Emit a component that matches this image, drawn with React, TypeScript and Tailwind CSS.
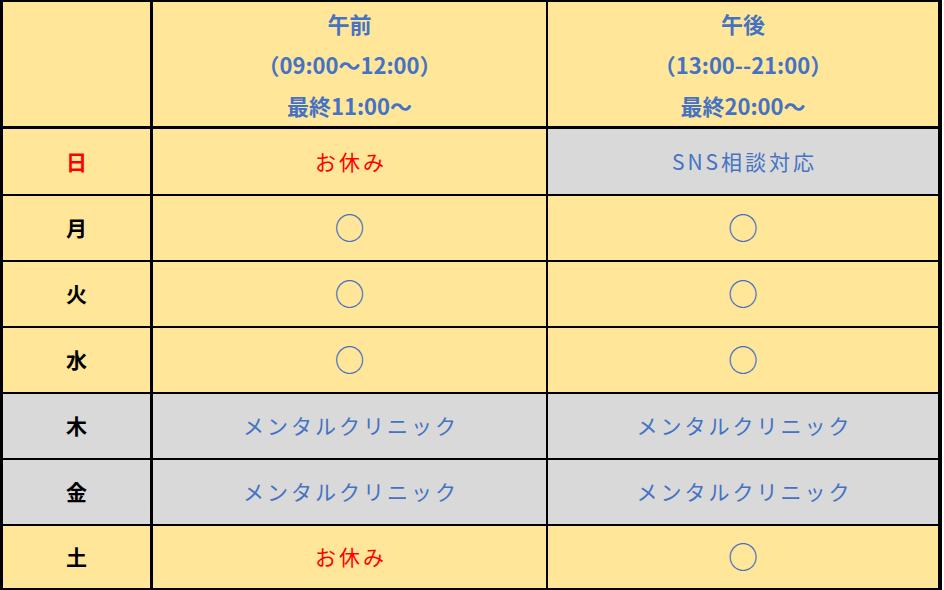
import React from "react";

const Y = "bg-[#FFE699]";
const G = "bg-[#D9D9D9]";

type Cell = { text: string; kind: "off" | "circle" | "blue"; bg: string };
type Row = { day: string; red?: boolean; dayBg: string; h: string; last?: boolean; am: Cell; pm: Cell };

const circle = (bg: string): Cell => ({ text: "○", kind: "circle", bg });
const off = (bg: string): Cell => ({ text: "お休み", kind: "off", bg });
const blue = (t: string, bg: string): Cell => ({ text: t, kind: "blue", bg });

const rows: Row[] = [
  { day: "日", red: true, dayBg: Y, h: "h-[67px]", am: off(Y), pm: blue("SNS相談対応", G) },
  { day: "月", dayBg: Y, h: "h-[66px]", am: circle(Y), pm: circle(Y) },
  { day: "火", dayBg: Y, h: "h-[66px]", am: circle(Y), pm: circle(Y) },
  { day: "水", dayBg: Y, h: "h-[66px]", am: circle(Y), pm: circle(Y) },
  { day: "木", dayBg: G, h: "h-[66px]", am: blue("メンタルクリニック", G), pm: blue("メンタルクリニック", G) },
  { day: "金", dayBg: G, h: "h-[66px]", am: blue("メンタルクリニック", G), pm: blue("メンタルクリニック", G) },
  { day: "土", dayBg: Y, h: "h-[62px]", last: true, am: off(Y), pm: circle(Y) },
];

function Content({ c }: { c: Cell }) {
  if (c.kind === "circle") {
    return <span className="text-[#4472C4] text-[30px] leading-none -mt-[5px]">{c.text}</span>;
  }
  if (c.kind === "off") {
    return <span className="text-[#FF0000] text-[21px] tracking-[3px] pl-[3px]">{c.text}</span>;
  }
  return <span className="text-[#4472C4] text-[21px] tracking-[3px] pl-[3px]">{c.text}</span>;
}

export default function App() {
  return (
    <div className="w-[944px] h-[590px] bg-white" style={{ fontFamily: '"Noto Sans CJK JP", "Noto Sans", sans-serif' }}>
      <div className="w-[942px] h-[590px] border-l-[3px] border-t-2 border-r-4 border-b-2 border-black flex flex-col">
        <div className="flex h-[127px] border-b-[3px] border-black">
          <div className={`w-[150px] border-r-[3px] border-black ${Y}`} />
          <div className={`w-[395px] border-r-2 border-black ${Y} flex flex-col items-center justify-center text-[#4472C4] font-bold text-[22px] leading-[41px]`}>
            <div>午前</div>
            <div>（09:00〜12:00）</div>
            <div>最終11:00〜</div>
          </div>
          <div className={`flex-1 ${Y} flex flex-col items-center justify-center text-[#4472C4] font-bold text-[22px] leading-[41px]`}>
            <div>午後</div>
            <div>（13:00--21:00）</div>
            <div>最終20:00〜</div>
          </div>
        </div>
        {rows.map((r, i) => (
          <div key={i} className={`flex ${r.h} ${r.last ? "" : "border-b-2"} border-black`}>
            <div className={`w-[150px] border-r-[3px] border-black ${r.dayBg} flex items-center justify-center font-bold text-[21px] ${r.red ? "text-[#FF0000]" : "text-black"}`}>
              {r.day}
            </div>
            <div className={`w-[395px] border-r-2 border-black ${r.am.bg} flex items-center justify-center`}>
              <Content c={r.am} />
            </div>
            <div className={`flex-1 ${r.pm.bg} flex items-center justify-center`}>
              <Content c={r.pm} />
            </div>
          </div>
        ))}
      </div>
    </div>
  );
}
